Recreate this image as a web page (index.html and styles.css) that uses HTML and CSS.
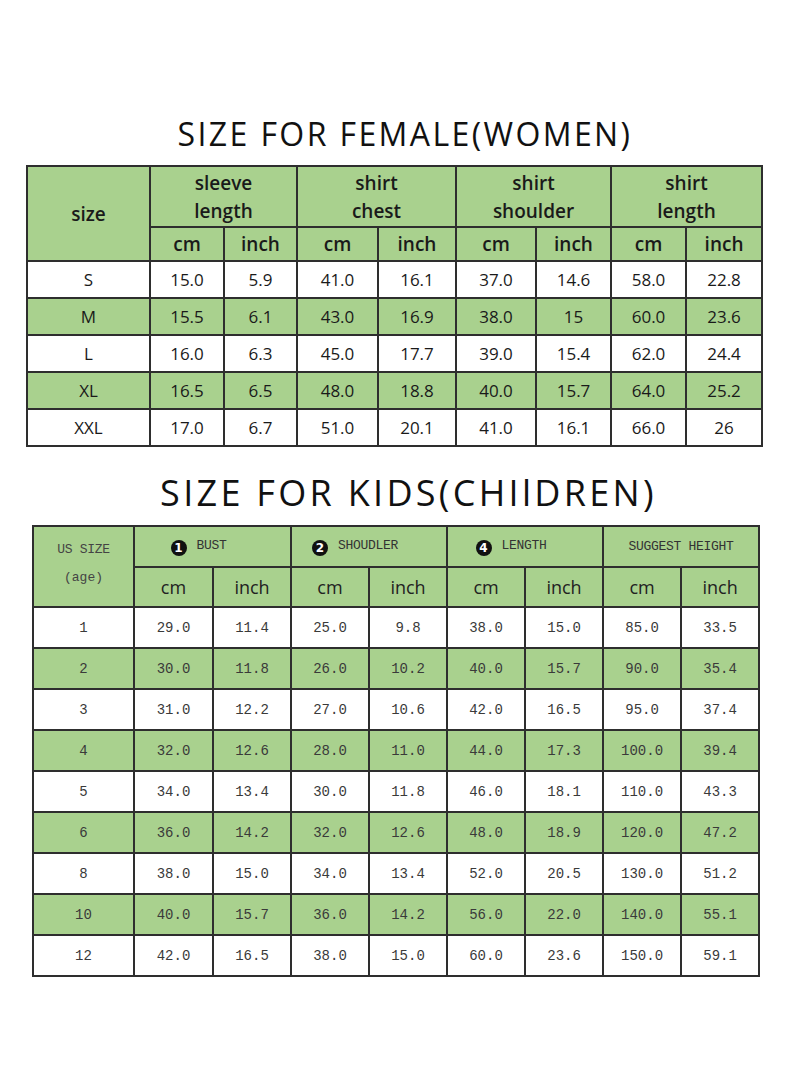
FILE: index.html
```html
<!DOCTYPE html>
<html>
<head>
<meta charset="utf-8">
<link rel="stylesheet" href="styles.css">
</head>
<body>
<main class="page">
  <h1 class="title title-female">SIZE FOR FEMALE(WOMEN)</h1>
  <table class="chart female">
    <colgroup>
      <col style="width:123px"><col style="width:74px"><col style="width:73px"><col style="width:81px"><col style="width:78px"><col style="width:80px"><col style="width:75px"><col style="width:75px"><col style="width:76px">
    </colgroup>
    <thead>
      <tr class="h1row">
        <th rowspan="2" class="size-head">size</th>
        <th colspan="2">sleeve<br>length</th>
        <th colspan="2">shirt<br>chest</th>
        <th colspan="2">shirt<br>shoulder</th>
        <th colspan="2">shirt<br>length</th>
      </tr>
      <tr class="h2row">
        <th>cm</th><th>inch</th><th>cm</th><th>inch</th><th>cm</th><th>inch</th><th>cm</th><th>inch</th>
      </tr>
    </thead>
    <tbody>
      <tr><td>S</td><td>15.0</td><td>5.9</td><td>41.0</td><td>16.1</td><td>37.0</td><td>14.6</td><td>58.0</td><td>22.8</td></tr>
      <tr class="g"><td>M</td><td>15.5</td><td>6.1</td><td>43.0</td><td>16.9</td><td>38.0</td><td>15</td><td>60.0</td><td>23.6</td></tr>
      <tr><td>L</td><td>16.0</td><td>6.3</td><td>45.0</td><td>17.7</td><td>39.0</td><td>15.4</td><td>62.0</td><td>24.4</td></tr>
      <tr class="g"><td>XL</td><td>16.5</td><td>6.5</td><td>48.0</td><td>18.8</td><td>40.0</td><td>15.7</td><td>64.0</td><td>25.2</td></tr>
      <tr><td>XXL</td><td>17.0</td><td>6.7</td><td>51.0</td><td>20.1</td><td>41.0</td><td>16.1</td><td>66.0</td><td>26</td></tr>
    </tbody>
  </table>

  <h1 class="title title-kids">SIZE FOR KIDS(CHIlDREN)</h1>
  <table class="chart kids">
    <colgroup>
      <col style="width:101px"><col style="width:79px"><col style="width:78px"><col style="width:78px"><col style="width:78px"><col style="width:78px"><col style="width:78px"><col style="width:78px"><col style="width:78px">
    </colgroup>
    <thead>
      <tr class="h1row">
        <th rowspan="2" class="us-head"><span class="us-l1">US SIZE</span><span class="us-l2">(age)</span></th>
        <th colspan="2" class="cap offset"><span class="num">1</span>BUST</th>
        <th colspan="2" class="cap offset"><span class="num">2</span>SHOUDLER</th>
        <th colspan="2" class="cap offset"><span class="num">4</span>LENGTH</th>
        <th colspan="2" class="cap">SUGGEST HEIGHT</th>
      </tr>
      <tr class="h2row">
        <th>cm</th><th>inch</th><th>cm</th><th>inch</th><th>cm</th><th>inch</th><th>cm</th><th>inch</th>
      </tr>
    </thead>
    <tbody>
      <tr><td>1</td><td>29.0</td><td>11.4</td><td>25.0</td><td>9.8</td><td>38.0</td><td>15.0</td><td>85.0</td><td>33.5</td></tr>
      <tr class="g"><td>2</td><td>30.0</td><td>11.8</td><td>26.0</td><td>10.2</td><td>40.0</td><td>15.7</td><td>90.0</td><td>35.4</td></tr>
      <tr><td>3</td><td>31.0</td><td>12.2</td><td>27.0</td><td>10.6</td><td>42.0</td><td>16.5</td><td>95.0</td><td>37.4</td></tr>
      <tr class="g"><td>4</td><td>32.0</td><td>12.6</td><td>28.0</td><td>11.0</td><td>44.0</td><td>17.3</td><td>100.0</td><td>39.4</td></tr>
      <tr><td>5</td><td>34.0</td><td>13.4</td><td>30.0</td><td>11.8</td><td>46.0</td><td>18.1</td><td>110.0</td><td>43.3</td></tr>
      <tr class="g"><td>6</td><td>36.0</td><td>14.2</td><td>32.0</td><td>12.6</td><td>48.0</td><td>18.9</td><td>120.0</td><td>47.2</td></tr>
      <tr><td>8</td><td>38.0</td><td>15.0</td><td>34.0</td><td>13.4</td><td>52.0</td><td>20.5</td><td>130.0</td><td>51.2</td></tr>
      <tr class="g"><td>10</td><td>40.0</td><td>15.7</td><td>36.0</td><td>14.2</td><td>56.0</td><td>22.0</td><td>140.0</td><td>55.1</td></tr>
      <tr><td>12</td><td>42.0</td><td>16.5</td><td>38.0</td><td>15.0</td><td>60.0</td><td>23.6</td><td>150.0</td><td>59.1</td></tr>
    </tbody>
  </table>
</main>
</body>
</html>
```

FILE: styles.css
```css
* { box-sizing: border-box; }
html, body { margin: 0; padding: 0; background: #fff; }
body { width: 800px; height: 1091px; overflow: hidden; }
.page { padding-top: 114px; }

.title {
  margin: 0;
  font-family: "Open Sans", "DejaVu Sans", sans-serif;
  font-weight: 400;
  color: #111;
  text-align: center;
}
.title-female {
  font-size: 32px;
  line-height: 40px;
  letter-spacing: 2.4px;
  padding-left: 10px;
  margin-bottom: 11px;
}
.title-kids {
  font-size: 36px;
  line-height: 44px;
  letter-spacing: 3.3px;
  padding-left: 17px;
  margin-top: 24px;
  margin-bottom: 10px;
}

.chart {
  border-collapse: collapse;
  table-layout: fixed;
}
.chart th, .chart td {
  border: 2px solid #2e2e2e;
  text-align: center;
  vertical-align: middle;
  padding: 0;
}

/* female */
.female {
  margin-left: 26px;
  width: 735px;
  font-family: "Open Sans", "DejaVu Sans", sans-serif;
  color: #1a1a1a;
}
.female thead th {
  background: #a9d18e;
  font-weight: 600;
  font-size: 19px;
  line-height: 28px;
}
.female .h1row { height: 61px; }
.female .h2row { height: 34px; }
.female tbody tr { height: 37px; }
.female tbody td { font-size: 17px; }
.female tbody tr.g td { background: #a9d18e; }

/* kids */
.kids {
  margin-left: 32px;
  width: 726px;
  color: #333;
}
.kids thead th {
  background: #a9d18e;
  font-weight: 400;
}
.kids .h1row { height: 41px; }
.kids .h2row { height: 40px; }
.kids .h2row th {
  font-family: "Open Sans", "DejaVu Sans", sans-serif;
  font-size: 18px;
  color: #222;
}
.kids .cap {
  font-family: "Liberation Mono", monospace;
  font-size: 13px;
  color: #333;
  letter-spacing: -0.3px;
}
.kids .offset { padding-right: 28px; }
.num {
  display: inline-flex;
  align-items: center;
  justify-content: center;
  width: 16px;
  height: 16px;
  border-radius: 50%;
  background: #111;
  color: #fff;
  font-family: "DejaVu Sans", sans-serif;
  font-weight: 700;
  font-size: 12px;
  margin-right: 10px;
  vertical-align: -3px;
  letter-spacing: 0;
}
.us-head {
  font-family: "Liberation Mono", monospace;
  color: #444;
  vertical-align: top !important;
  padding-top: 14px !important;
}
.us-l1 { display: block; font-size: 13px; line-height: 18px; letter-spacing: -0.3px; }
.us-l2 { display: block; font-size: 13px; line-height: 18px; margin-top: 10px; }
.kids tbody tr { height: 41px; }
.kids tbody td {
  font-family: "Liberation Mono", monospace;
  font-size: 14px;
  color: #3a3a3a;
}
.kids tbody tr.g td { background: #a9d18e; }
```
